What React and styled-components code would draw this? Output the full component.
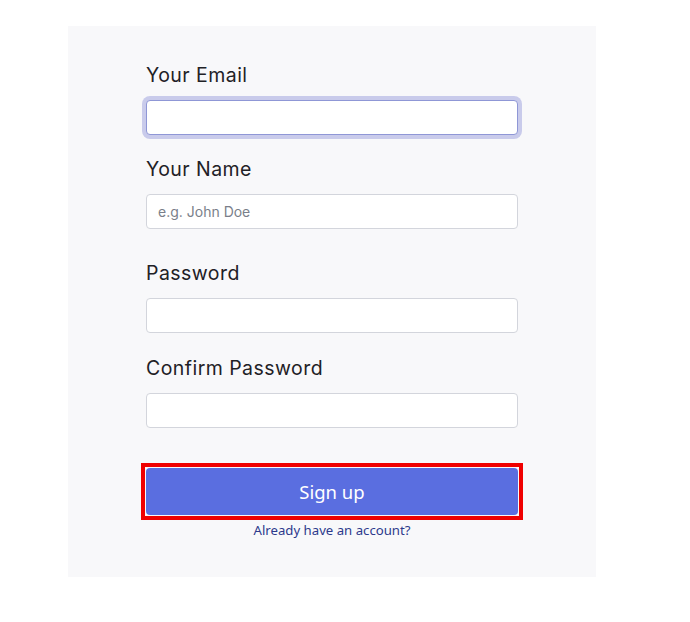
import styled, { createGlobalStyle } from "styled-components";

const GlobalStyle = createGlobalStyle`
  body {
    margin: 0;
    background: #ffffff;
    font-family: "Inter", "Noto Sans", sans-serif;
  }
  * {
    box-sizing: border-box;
  }
`;

const Page = styled.div`
  padding: 26px 0 0 68px;
`;

const Panel = styled.form`
  width: 528px;
  height: 551px;
  background-color: #f8f8fa;
  padding: 35px 78px 0;
  display: flex;
  flex-direction: column;
`;

const Field = styled.div`
  display: flex;
  flex-direction: column;
  margin-bottom: ${(p) => p.$gap}px;
`;

const Label = styled.label`
  font-family: "Inter", "Noto Sans", sans-serif;
  font-size: 19.5px;
  line-height: 28px;
  color: #1f2126;
  margin-bottom: 11px;
  letter-spacing: 0.45px;
`;

const Input = styled.input`
  height: 35px;
  width: 100%;
  padding: 0 11px;
  border: 1px solid ${(p) => (p.$focused ? "#8f97d6" : "#d3d5dc")};
  border-radius: 4px;
  background: #ffffff;
  font-family: "Inter", sans-serif;
  font-size: 14px;
  color: #333;
  box-shadow: ${(p) => (p.$focused ? "0 0 0 4px #c9cbeb" : "none")};
  outline: none;

  &::placeholder {
    color: #7a7f8a;
  }
`;

const FocusFrame = styled.div`
  margin: 0 -5px;
  padding: 1px;
  border: 4px solid #f00000;
`;

const SubmitButton = styled.button`
  display: block;
  height: 47px;
  width: 100%;
  border: none;
  border-radius: 4px;
  background-color: #5a6ee0;
  color: #ffffff;
  font-family: "Noto Sans", sans-serif;
  font-size: 18.5px;
  cursor: pointer;
`;

const LoginLink = styled.a`
  margin-top: 1px;
  text-align: center;
  font-family: "Noto Sans", sans-serif;
  font-size: 13.2px;
  color: #2d3a8c;
  text-decoration: none;
`;

export default function App() {
  return (
    <>
      <GlobalStyle />
      <Page>
        <Panel onSubmit={(e) => e.preventDefault()}>
          <Field $gap={20}>
            <Label>Your Email</Label>
            <Input type="email" $focused />
          </Field>
          <Field $gap={30}>
            <Label>Your Name</Label>
            <Input type="text" placeholder="e.g. John Doe" />
          </Field>
          <Field $gap={21}>
            <Label>Password</Label>
            <Input type="password" />
          </Field>
          <Field $gap={35}>
            <Label>Confirm Password</Label>
            <Input type="password" />
          </Field>
          <FocusFrame>
            <SubmitButton type="submit">Sign up</SubmitButton>
          </FocusFrame>
          <LoginLink href="#">Already have an account?</LoginLink>
        </Panel>
      </Page>
    </>
  );
}
